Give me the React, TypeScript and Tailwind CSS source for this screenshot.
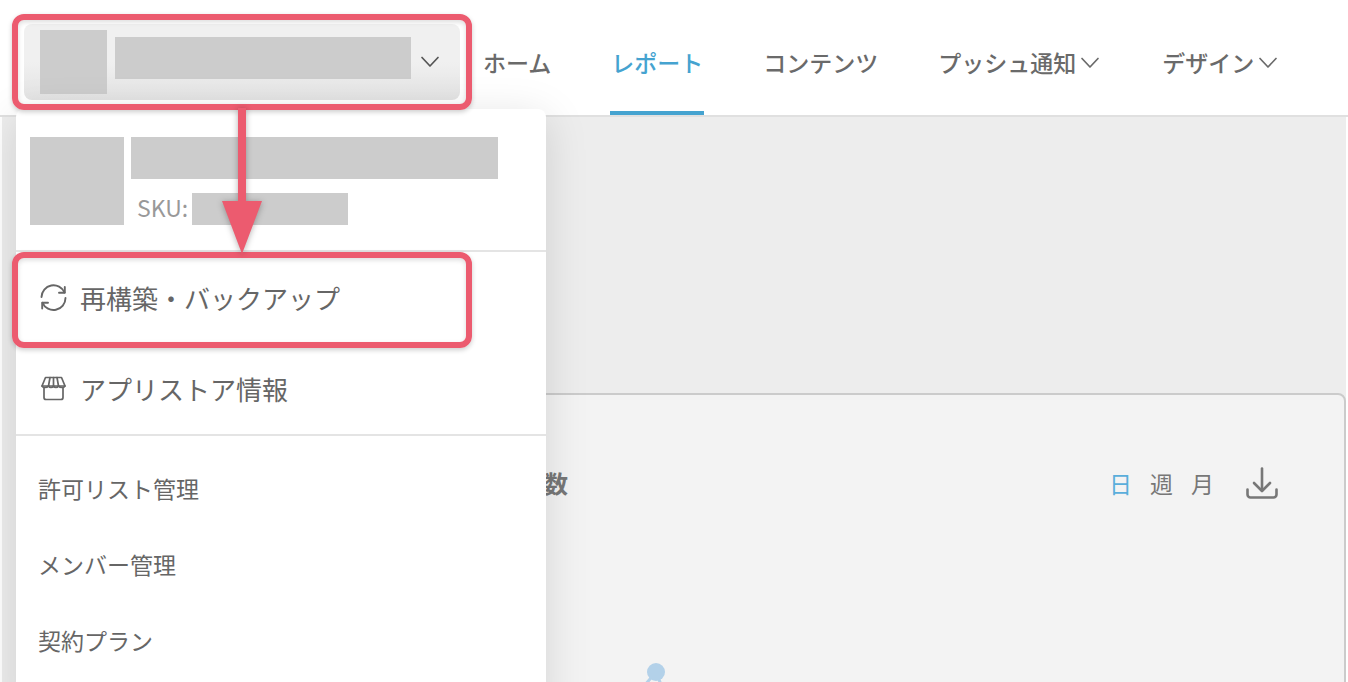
import { ReactNode } from "react";

type NavItem = {
  label: string
  active?: boolean
  dropdown?: boolean
}

const navItems: NavItem[] = [
  { label: "ホーム" },
  { label: "レポート", active: true },
  { label: "コンテンツ" },
  { label: "プッシュ通知", dropdown: true },
  { label: "デザイン", dropdown: true },
]

const manageItems = ["許可リスト管理", "メンバー管理", "契約プラン"]

function ChevronIcon() {
  return (
    <svg className="size-6 shrink-0" viewBox="0 0 24 24" fill="none" stroke="currentColor" strokeWidth="1.7" strokeLinecap="round" strokeLinejoin="round">
      <path d="M4 7.5l8 8.5 8-8.5" />
    </svg>
  )
}

function RefreshIcon() {
  return (
    <svg className="size-7 shrink-0" viewBox="0 0 28 28" fill="none" stroke="currentColor" strokeWidth="1.9" strokeLinecap="round" strokeLinejoin="round">
      <path d="M1.500 13A12 12 0 0 1 24.500 8.500" />
      <path d="M24.800 3v5.700h-5.800" />
      <path d="M25.500 14A12 12 0 0 1 2.500 18.800" />
      <path d="M2.200 24.500v-5.700h5.800" />
    </svg>
  )
}

function StoreIcon() {
  return (
    <svg className="size-7 shrink-0" viewBox="0 0 28 28" fill="none" stroke="currentColor" strokeWidth="1.7" strokeLinecap="round" strokeLinejoin="round">
      <path d="M5.500 2.500h16l3.500 8.500h-23z" />
      <path d="M10 2.500L8.500 11M13.500 2.500V11M17 2.500l1.500 8.500" />
      <path d="M2 11c.6 2 5 2 6.500 0 1.300 2 3.700 2 5 0 1.200 2 3.700 2 5 0 1.400 2 5.900 2 6.500 0" />
      <path d="M4 12.500v10a2 2 0 0 0 2 2h15a2 2 0 0 0 2-2v-10" />
    </svg>
  )
}

function DownloadIcon() {
  return (
    <svg className="size-8" viewBox="0 0 32 32" fill="none" stroke="currentColor" strokeWidth="2.6" strokeLinecap="round" strokeLinejoin="round">
      <path d="M16 1.500v22" />
      <path d="M8 16l8 8 8-8" />
      <path d="M1.500 22.500v5a3 3 0 0 0 3 3h23a3 3 0 0 0 3-3v-5" />
    </svg>
  )
}

function Highlight({ className }: { className: string }) {
  return (
    <div className={`pointer-events-none absolute h-24 w-[460px] rounded-xl border-6 border-[#ec5b6f] shadow-[0_2px_5px_rgba(0,0,0,0.2),inset_0_2px_5px_rgba(0,0,0,0.14)] ${className}`} />
  )
}

function MenuLink({ icon, children }: { icon: ReactNode, children: ReactNode }) {
  return (
    <a href="#" className="flex h-[91px] items-center gap-3 pl-6 text-[26px]">
      {icon}
      <span>{children}</span>
    </a>
  )
}

function AppMenu() {
  return (
    <div className="absolute top-[109px] left-4 w-[530px] rounded-lg bg-white pb-10 text-[#666] shadow-[0_8px_44px_rgba(0,0,0,0.13)]">
      <div className="flex gap-[7px] border-b-2 border-[#e4e4e4] pt-7 pb-[25px] pl-[14px]">
        <div className="h-[88px] w-[94px] bg-[#ccc]" />
        <div className="flex flex-col justify-between">
          <div className="h-[42px] w-[367px] bg-[#ccc]" />
          <div className="flex items-start gap-1 pl-[6px]">
            <span className="text-[23px] leading-7 text-[#999]">SKU:</span>
            <div className="h-8 w-[156px] bg-[#ccc]" />
          </div>
        </div>
      </div>

      <nav className="border-b-2 border-[#e4e4e4]">
        <MenuLink icon={<RefreshIcon />}>再構築・バックアップ</MenuLink>
        <MenuLink icon={<StoreIcon />}>アプリストア情報</MenuLink>
      </nav>

      <nav className="pt-[14px]">
        {manageItems.map((item) => (
          <a key={item} href="#" className="flex h-[76px] items-center pl-[22px] text-[23px]">{item}</a>
        ))}
      </nav>
    </div>
  )
}

function Arrow() {
  return (
    <svg className="pointer-events-none absolute top-[108px] left-[222px] h-[146px] w-10 drop-shadow-[0_1px_3px_rgba(0,0,0,0.3)]" viewBox="0 0 40 146" fill="#ec5b6f">
      <path d="M16 0h8v93h16L20 146 0 93h16z" />
    </svg>
  )
}

function Header() {
  return (
    <header className="flex h-[117px] shrink-0 items-stretch border-b-2 border-[#e0e0e0] bg-white pl-6">
      <button type="button" aria-label="アプリを選択" className="mt-6 flex h-[76px] w-[436px] shrink-0 items-center rounded-lg bg-linear-to-b from-[#f0f0f0] from-50% to-[#e3e3e3] pl-4 text-[#555]">
        <span className="h-16 w-[67px] bg-[#ccc]" />
        <span className="mr-[7px] mb-2 ml-2 h-[42px] w-[296px] bg-[#ccc]" />
        <ChevronIcon />
      </button>
      <nav className="ml-[22px] flex gap-[58px]">
        {navItems.map(({ label, active, dropdown }) => (
          <a
            key={label}
            href="#"
            className={`flex items-center gap-[2px] border-b-4 px-px pt-[14px] text-[23px] font-medium whitespace-nowrap ${active ? "border-[#45a3d0] text-[#45a3d0]" : "border-transparent text-[#6a6a6a]"}`}
          >
            {label}
            {dropdown && <ChevronIcon />}
          </a>
        ))}
      </nav>
    </header>
  )
}

function ReportCard() {
  return (
    <section className="mt-[276px] ml-10 flex-1 rounded-tr-lg border-2 border-[#cbcbcb] bg-[#f3f3f3] pt-[68px] text-[#777]">
      <div className="flex h-10 items-center pr-[66px] pl-[500px]">
        <h2 className="text-[24px] font-bold">数</h2>
        <div className="ml-auto flex gap-[18px] text-[23px]">
          <button type="button" className="text-[#5aaedb]">日</button>
          <button type="button">週</button>
          <button type="button">月</button>
        </div>
        <button type="button" aria-label="ダウンロード" className="ml-8"><DownloadIcon /></button>
      </div>
      <svg className="h-60 w-full" fill="none" stroke="#b3d1e9" strokeWidth="3">
        <path d="M560 230L612 169L640 240" />
        <circle cx="612" cy="169" r="9" fill="#b3d1e9" stroke="none" />
      </svg>
    </section>
  )
}

export default function App() {
  return (
    <div className="relative flex h-screen flex-col overflow-hidden bg-white font-['Noto_Sans_CJK_JP',sans-serif]">
      <Header />
      <main className="mx-[2px] flex flex-1 flex-col bg-[#ededed]">
        <ReportCard />
      </main>
      <AppMenu />
      <Highlight className="top-[14px] left-3" />
      <Highlight className="top-[252px] left-3" />
      <Arrow />
    </div>
  )
}
